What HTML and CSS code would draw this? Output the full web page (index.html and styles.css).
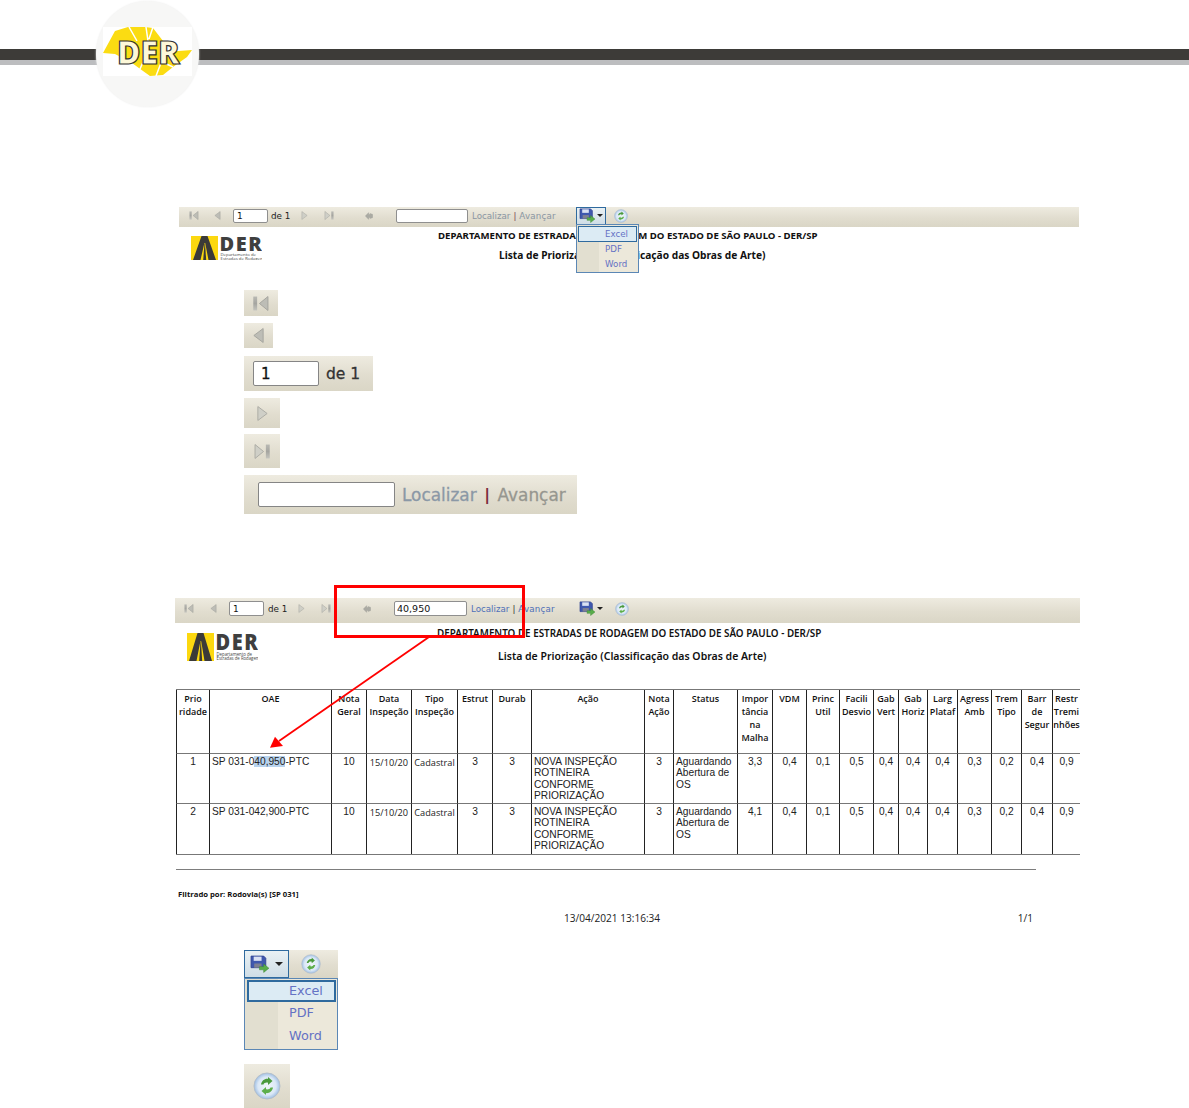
FILE: index.html
```html
<!DOCTYPE html>
<html lang="pt-BR">
<head>
<meta charset="utf-8">
<title>Lista de Priorização</title>
<link rel="stylesheet" href="styles.css">
</head>
<body>
<svg class="defs" width="0" height="0" aria-hidden="true">
  <defs>
    <linearGradient id="gbar" x1="0" x2="0" y1="0" y2="1"><stop offset="0" stop-color="#b9b9b4"/><stop offset=".5" stop-color="#a5a5a0"/><stop offset="1" stop-color="#c4c4be"/></linearGradient>
    <radialGradient id="gref" cx=".5" cy=".5" r=".5"><stop offset="0" stop-color="#f1f6fb"/><stop offset=".7" stop-color="#dbe8f6"/><stop offset="1" stop-color="#9fbfe4"/></radialGradient>
    <symbol id="i-first" viewBox="0 0 11 11"><rect x="0.5" y="1" width="2.500" height="9" fill="url(#gbar)"/><path d="M10 1v9L4.500 5.500z" fill="#bdbdb6" stroke="#a3a39d" stroke-width=".6"/></symbol>
    <symbol id="i-prev" viewBox="0 0 8 11"><path d="M7 1v9L1 5.500z" fill="#bdbdb6" stroke="#a3a39d" stroke-width=".6"/></symbol>
    <symbol id="i-next" viewBox="0 0 8 11"><path d="M1 1v9l6-4.500z" fill="#cfcfc7" stroke="#aaaaa3" stroke-width=".6"/></symbol>
    <symbol id="i-last" viewBox="0 0 11 11"><path d="M1 1v9l5.500-4.500z" fill="#cfcfc7" stroke="#aaaaa3" stroke-width=".6"/><rect x="8" y="1" width="2.500" height="9" fill="url(#gbar)"/></symbol>
    <symbol id="i-back" viewBox="0 0 10 10"><path d="M0.500 5L4.500 .8v2.200h2V2l3 1v4l-3 1V7h-2v2.200z" fill="#aaaaa3" stroke="#9b9b95" stroke-width=".5"/></symbol>
    <symbol id="i-save" viewBox="0 0 19 17">
      <path d="M1 1h12l2 2v9H1z" fill="#3f58ae" stroke="#2e4290" stroke-width=".8"/>
      <rect x="3.500" y="1.500" width="7.500" height="4" fill="#d9e1f3"/>
      <rect x="4" y="8" width="7" height="4" fill="#7d8092"/>
      <path d="M9 11h4V8.500l5 4-5 4V14H9z" fill="#58ad4a" stroke="#3f8a35" stroke-width=".5"/>
    </symbol>
    <symbol id="i-refresh" viewBox="0 0 28 28">
      <circle cx="14" cy="14" r="13" fill="url(#gref)" stroke="#b4bfca" stroke-width="1"/>
      <path d="M8 12.500c.6-3.500 3.500-6 7-5.600V5l4.500 4-4.500 4v-2.300c-2.500-.4-4 .4-4.500 1.800z" fill="#4a9a3c"/>
      <path d="M20 15.500c-.6 3.500-3.500 6-7 5.600V23l-4.500-4 4.500-4v2.300c2.500.4 4-.4 4.500-1.800z" fill="#5dae4a"/>
    </symbol>
    <symbol id="i-der" viewBox="0 0 71 24" preserveAspectRatio="none">
      <rect x="0" y="0" width="27" height="24" fill="#fcd80f"/>
      <path d="M2 24 10.500 0h6L25 24h-7.500L14.200 7h-.8L9.500 24z" fill="#3b3a38"/>
      <path d="M13.500 7.500 12.200 24h3l-1.200-16.500z" fill="#3b3a38"/>
      <text x="28.500" y="14.500" class="der-word">DER</text>
      <text x="29.500" y="19.500" class="der-sub">Departamento de</text>
      <text x="29.500" y="23.500" class="der-sub">Estradas de Rodagem</text>
    </symbol>
  </defs>
</svg>

<div class="page">
  <header class="top">
    <div class="bar"></div>
    <div class="seal">
      <svg class="seal-art" viewBox="0 0 89 49" width="89" height="49">
        <rect width="89" height="49" fill="#fff"/>
        <path d="M0 26 12 4 25 0 42 0 50 1 60 14 62 25 89 23 84 30 70 40 60 48 47 49 40 44 29 36 12 27z" fill="#fbdc12"/>
        <path d="M26 0 34 14M43 0 45 14M50 0 46 12M61 28 53 49M57 34 70 40M40 35 34 49" stroke="#fff" stroke-width="1.500" fill="none"/>
        <text x="14" y="37" class="seal-word">DER</text>
      </svg>
    </div>
  </header>

  <div class="toolbar toolbar-a">
    <svg class="ic w10 ml10"><use href="#i-first"/></svg>
    <svg class="ic w7 ml15"><use href="#i-prev"/></svg>
    <input class="field pg ml12" value="1" aria-label="Página">
    <span class="tb-text ml3">de 1</span>
    <svg class="ic w7 ml10"><use href="#i-next"/></svg>
    <svg class="ic w10 ml16"><use href="#i-last"/></svg>
    <svg class="ic w8 ml31"><use href="#i-back"/></svg>
    <input class="field find ml23" aria-label="Localizar">
    <span class="tb-link ml4">Localizar</span><span class="tb-sep">|</span><span class="tb-link">Avançar</span>
    <span class="savebtn active ml20"><svg class="ic-save"><use href="#i-save"/></svg><i class="caret"></i></span>
    <svg class="ic-ref ml8"><use href="#i-refresh"/></svg>
  </div>

  <div class="rep rep-a">
    <svg class="rep-logo la"><use href="#i-der"/></svg>
    <div class="rep-title">DEPARTAMENTO DE ESTRADAS DE RODAGEM DO ESTADO DE SÃO PAULO - DER/SP</div>
    <div class="rep-sub">Lista de Priorização (Classificação das Obras de Arte)</div>
    <ul class="menu menu-sm">
      <li class="on">Excel</li>
      <li>PDF</li>
      <li>Word</li>
    </ul>
  </div>

  <div class="parts">
    <div class="part p1"><svg class="big-first"><use href="#i-first"/></svg></div>
    <div class="part p2"><svg class="big-prev"><use href="#i-prev"/></svg></div>
    <div class="part p3"><input class="field big pg-big" value="1" aria-label="Página"><span class="big-text">de 1</span></div>
    <div class="part p4"><svg class="big-prev"><use href="#i-next"/></svg></div>
    <div class="part p5"><svg class="big-first"><use href="#i-last"/></svg></div>
    <div class="part p6"><input class="field big find-big" aria-label="Localizar"><span class="big-link">Localizar</span><span class="big-sep">|</span><span class="big-link">Avançar</span></div>
  </div>

  <div class="toolbar toolbar-b">
    <svg class="ic w10 ml9"><use href="#i-first"/></svg>
    <svg class="ic w7 ml16"><use href="#i-prev"/></svg>
    <input class="field pg ml12" value="1" aria-label="Página">
    <span class="tb-text ml4">de 1</span>
    <svg class="ic w7 ml10"><use href="#i-next"/></svg>
    <svg class="ic w10 ml16"><use href="#i-last"/></svg>
    <svg class="ic w8 ml32"><use href="#i-back"/></svg>
    <input class="field find ml23" value="40,950" aria-label="Localizar">
    <span class="tb-link blue ml4">Localizar</span><span class="tb-sep dark">|</span><span class="tb-link blue">Avançar</span>
    <span class="savebtn ml22"><svg class="ic-save"><use href="#i-save"/></svg><i class="caret"></i></span>
    <svg class="ic-ref ml8"><use href="#i-refresh"/></svg>
  </div>

  <div class="rep rep-b">
    <svg class="rep-logo lb"><use href="#i-der"/></svg>
    <div class="rep-title">DEPARTAMENTO DE ESTRADAS DE RODAGEM DO ESTADO DE SÃO PAULO - DER/SP</div>
    <div class="rep-sub">Lista de Priorização (Classificação das Obras de Arte)</div>
  </div>

  <div class="tablewrap">
    <table class="grid">
      <colgroup>
        <col class="c33"><col class="c122"><col class="c35"><col class="c45"><col class="c46"><col class="c35"><col class="c39"><col class="c113"><col class="c29"><col class="c64"><col class="c35"><col class="c34"><col class="c33"><col class="c34"><col class="c25"><col class="c29"><col class="c30"><col class="c34"><col class="c30"><col class="c31"><col class="c28">
      </colgroup>
      <thead>
        <tr>
          <th>Prio<br>ridade</th><th>OAE</th><th>Nota<br>Geral</th><th>Data<br>Inspeção</th><th>Tipo<br>Inspeção</th><th>Estrut</th><th>Durab</th><th>Ação</th><th>Nota<br>Ação</th><th>Status</th><th>Impor<br>tância<br>na<br>Malha</th><th>VDM</th><th>Princ<br>Util</th><th>Facili<br>Desvio</th><th>Gab<br>Vert</th><th>Gab<br>Horiz</th><th>Larg<br>Plataf</th><th>Agress<br>Amb</th><th>Trem<br>Tipo</th><th>Barr<br>de<br>Segur</th><th>Restr<br>Tremi<br>nhões</th>
        </tr>
      </thead>
      <tbody>
        <tr>
          <td>1</td><td class="left">SP 031-0<mark>40,950</mark>-PTC</td><td>10</td><td class="alt">15/10/20</td><td class="alt">Cadastral</td><td>3</td><td>3</td><td class="left">NOVA INSPEÇÃO<br>ROTINEIRA<br>CONFORME<br>PRIORIZAÇÃO</td><td>3</td><td class="left">Aguardando<br>Abertura de<br>OS</td><td>3,3</td><td>0,4</td><td>0,1</td><td>0,5</td><td>0,4</td><td>0,4</td><td>0,4</td><td>0,3</td><td>0,2</td><td>0,4</td><td>0,9</td>
        </tr>
        <tr>
          <td>2</td><td class="left">SP 031-042,900-PTC</td><td>10</td><td class="alt">15/10/20</td><td class="alt">Cadastral</td><td>3</td><td>3</td><td class="left">NOVA INSPEÇÃO<br>ROTINEIRA<br>CONFORME<br>PRIORIZAÇÃO</td><td>3</td><td class="left">Aguardando<br>Abertura de<br>OS</td><td>4,1</td><td>0,4</td><td>0,1</td><td>0,5</td><td>0,4</td><td>0,4</td><td>0,4</td><td>0,3</td><td>0,2</td><td>0,4</td><td>0,9</td>
        </tr>
      </tbody>
    </table>
  </div>

  <div class="rule"></div>
  <div class="filter">Filtrado por: Rodovia(s) [SP 031]</div>
  <div class="foot"><span class="stamp">13/04/2021 13:16:34</span><span class="pages">1/1</span></div>

  <div class="export">
    <div class="export-top">
      <span class="savebtn active big-save"><svg class="ic-save-big"><use href="#i-save"/></svg><i class="caret big-caret"></i></span>
      <svg class="ic-ref-mid"><use href="#i-refresh"/></svg>
    </div>
    <ul class="menu menu-lg">
      <li class="on">Excel</li>
      <li>PDF</li>
      <li>Word</li>
    </ul>
  </div>
  <div class="part p7"><svg class="ic-ref-big"><use href="#i-refresh"/></svg></div>

  <div class="callout"></div>
  <svg class="pointer" viewBox="0 0 170 120" width="170" height="120">
    <path d="M161 1 11 105" stroke="#f00" stroke-width="1.800" fill="none"/>
    <path d="M2 111.700 7 100.700 15 110z" fill="#f00"/>
  </svg>
</div>
</body>
</html>
```

FILE: styles.css
```css
* { box-sizing: border-box; }
html, body { margin: 0; padding: 0; background: #fff; }
body { font-family: "DejaVu Sans", sans-serif; color: #111; }
.defs { position: absolute; }
.page { position: relative; width: 1189px; height: 1108px; overflow: hidden; }

/* header */
.top { position: relative; height: 206px; }
.bar { position: absolute; top: 49px; left: 0; right: 0; height: 16px; background: #3d3b38; border-bottom: 5px solid #bcbdbf; }
.seal { position: absolute; left: 96px; top: 1px; width: 103px; height: 106px; border-radius: 50%; background: #f7f7f6; display: flex; align-items: center; justify-content: center; padding: 0 0 4px 0; box-shadow: 0 0 2px #eee; }
.seal-art { display: block; margin-top: -1px; }
.seal-word { font: 800 32px "Open Sans", sans-serif; fill: #fdf8d8; stroke: #333; stroke-width: 1.200px; }

/* toolbars */
.toolbar { display: flex; align-items: center; background: linear-gradient(#eeebe0, #e1ddcf 55%, #dad6c6); }
.toolbar-a { margin: 1px 0 0 179px; width: 900px; height: 20px; padding-bottom: 3px; }
.toolbar-b { margin: 84px 0 0 175px; width: 905px; height: 25px; padding-bottom: 4px; }
.ic { height: 11px; flex: none; }
.w10 { width: 10px; }
.w7 { width: 7px; }
.w8 { width: 8px; height: 10px; }
.ml3 { margin-left: 3px; }
.ml4 { margin-left: 4px; }
.ml8 { margin-left: 8px; }
.ml9 { margin-left: 9px; }
.ml10 { margin-left: 10px; }
.ml12 { margin-left: 12px; }
.ml15 { margin-left: 15px; }
.ml16 { margin-left: 16px; }
.ml20 { margin-left: 20px; }
.ml22 { margin-left: 22px; }
.ml23 { margin-left: 23px; }
.ml31 { margin-left: 31px; }
.ml32 { margin-left: 32px; }
.field { display: block; border: 1px solid #8f8f8f; border-radius: 2px; background: #fff; padding: 0 3px; outline: 0; color: #111; font: 9px "DejaVu Sans", sans-serif; }
.pg { width: 35px; height: 14px; }
.find { width: 72px; height: 14px; }
.toolbar-b .pg { height: 15px; }
.toolbar-b .find { height: 15px; width: 73px; padding-left: 2px; font-size: 9.500px; }
.tb-text { font-size: 8.800px; color: #222; width: 20px; white-space: nowrap; }
.tb-link { font-size: 8.700px; color: #8a96a3; white-space: nowrap; }
.tb-sep + .tb-link { letter-spacing: .2px; }
.tb-link.blue { color: #4e70b8; }
.tb-sep { font-size: 8.700px; color: #7a4450; margin: 0 3px; }
.tb-sep.dark { color: #333; }
.savebtn { display: flex; align-items: center; gap: 1px; width: 30px; height: 19px; padding-left: 2px; flex: none; }
.savebtn.active { border: 1px solid #2f6a9e; background: linear-gradient(#e9f1f4, #cfdde6); height: 18px; }
.ic-save { width: 17px; height: 15px; flex: none; }
.caret { width: 0; height: 0; border: 3px solid transparent; border-top: 3px solid #222; border-bottom: 0; flex: none; }
.ic-ref { width: 14px; height: 14px; flex: none; }

/* report heading */
.rep { position: relative; text-align: center; }
.rep-a { height: 48px; width: 900px; margin-left: 179px; }
.rep-b { height: 66px; width: 905px; margin-left: 175px; }
.rep-logo { position: absolute; display: block; width: 71px; }
.la { left: 12px; top: 9px; height: 24px; }
.lb { left: 12px; top: 10px; height: 28px; }
.der-word { font: 800 20px "Open Sans", sans-serif; fill: #3f3f3f; letter-spacing: 1.500px; }
.der-sub { font: 4.300px "Open Sans", sans-serif; fill: #444; }
.rep-title, .rep-sub { font-family: "Noto Sans", sans-serif; font-weight: 600; color: #111; white-space: nowrap; }
.rep-a .rep-title { position: absolute; left: 259px; top: 3px; font-size: 9.650px; line-height: 12px; font-weight: 700; }
.rep-a .rep-sub { position: absolute; left: 320px; top: 21px; font-size: 10.200px; line-height: 14px; font-weight: 700; }
.rep-b .rep-title { position: absolute; left: 262px; top: 4px; font-size: 9.850px; line-height: 12px; }
.rep-b .rep-sub { position: absolute; left: 323px; top: 26px; font-size: 10.500px; line-height: 14px; }

/* dropdown menu */
.menu { list-style: none; margin: 0; padding: 0; border: 1px solid #5b87b5; position: absolute; color: #6472c4; text-align: left; }
.menu-sm { left: 397px; top: -3px; width: 63px; height: 49px; padding: 1px; font-size: 8.700px; background: linear-gradient(90deg, #e2dfd0 22px, #ece8da 22px); }
.menu-sm li { height: 15px; line-height: 15px; padding-left: 27px; }
.menu-sm li.on { height: 16px; padding-left: 26px; border: 1px solid #2f6a9e; background: #dcebf4; }
.menu-lg { position: static; width: 94px; height: 72px; padding: 1px 1px 1px 2px; font-size: 12.800px; background: linear-gradient(90deg, #e2dfd0 33px, #ece8da 33px); }
.menu-lg li { height: 22.500px; line-height: 22.500px; padding-left: 42px; }
.menu-lg li.on { height: 22px; line-height: 18px; border: 2px solid #2f6a9e; background: #dcebf4; padding-left: 40px; }

/* cut-out parts */
.parts { display: flex; flex-direction: column; align-items: flex-start; margin: 15px 0 0 244px; }
.part { display: flex; align-items: center; flex: none; background: linear-gradient(#eeebe0, #e1ddcf 55%, #dad6c6); }
.p1 { width: 34px; height: 26px; justify-content: center; }
.p2 { width: 29px; height: 25px; margin-top: 7px; justify-content: center; }
.p3 { width: 129px; height: 35px; margin-top: 8px; padding-left: 9px; }
.p4 { width: 36px; height: 30px; margin-top: 7px; justify-content: center; }
.p5 { width: 36px; height: 34px; margin-top: 6px; justify-content: center; }
.p6 { width: 333px; height: 39px; margin-top: 7px; padding-left: 14px; }
.p7 { width: 46px; height: 44px; margin: 14px 0 0 244px; justify-content: center; }
.big-first { width: 20px; height: 17px; }
.big-prev { width: 13px; height: 17px; }
.field.big { height: 25px; font-size: 15px; padding: 0 7px; border-color: #858585; -webkit-text-stroke: .3px #111; }
.pg-big { width: 66px; }
.find-big { width: 137px; }
.big-text { margin-left: 7px; font-size: 15.500px; color: #333; -webkit-text-stroke: .3px #333; }
.big-link { font-size: 16.900px; color: #8b98a6; white-space: nowrap; -webkit-text-stroke: .3px #8b98a6; }
.big-link:last-child { color: #96968f; -webkit-text-stroke-color: #96968f; }
.big-sep { font-size: 16px; font-weight: 700; color: #7a2a3a; margin: 0 7.500px; }
.p6 .big-link:first-of-type { margin-left: 7px; }

/* data table */
.tablewrap { margin-left: 176px; width: 904px; height: 166px; overflow: hidden; }
.grid { table-layout: fixed; border-collapse: separate; border-spacing: 0; width: 904px; border-top: 1px solid #777; border-bottom: 1px solid #777; }
.c25 { width: 25px; } .c28 { width: 28px; } .c29 { width: 29px; } .c30 { width: 30px; } .c31 { width: 31px; } .c33 { width: 33px; } .c34 { width: 34px; } .c35 { width: 35px; } .c39 { width: 39px; } .c45 { width: 45px; } .c46 { width: 46px; } .c64 { width: 64px; } .c113 { width: 113px; } .c122 { width: 122px; }
.grid th, .grid td { border-left: 1px solid #222; padding: 0; overflow: hidden; text-align: center; vertical-align: top; white-space: nowrap; }
.grid th { height: 64px; padding-top: 2px; font: 600 9px/13px "Open Sans", sans-serif; color: #111; border-bottom: 1px solid #777; }
.grid td { height: 50px; padding-top: 2px; font: 10.200px/11.300px "Liberation Sans", sans-serif; color: #222; border-bottom: 1px solid #777; }
.grid tr:last-child td { border-bottom: 0; height: 50px; }
.grid td.left { text-align: left; padding-left: 2px; }
.grid td.alt { font: 9.200px/13px "Open Sans", sans-serif; }
mark { background: #b8d3ee; color: inherit; }

/* footer */
.rule { margin: 14px 0 0 176px; width: 860px; height: 1px; background: #7d7d7d; }
.filter { margin: 19px 0 0 178px; font: 700 7.700px/11px "Open Sans", sans-serif; color: #111; }
.foot { position: relative; margin: 12px 0 0 564px; width: 469px; height: 13px; display: flex; justify-content: space-between; font: 10.100px/13px "Open Sans", sans-serif; color: #222; }

/* export samples */
.export { margin: 25px 0 0 244px; width: 94px; }
.export-top { display: flex; align-items: center; height: 28px; width: 94px; background: linear-gradient(#eeebe0, #e1ddcf 55%, #dad6c6); }
.savebtn.big-save { width: 45px; height: 28px; margin: 0; padding-left: 5px; border-width: 1px; gap: 5px; }
.ic-save-big { width: 20px; height: 18px; flex: none; }
.big-caret { border-width: 4px; border-bottom: 0; }
.ic-ref-mid { width: 20px; height: 20px; margin-left: 12px; }
.ic-ref-big { width: 28px; height: 28px; }

/* annotation drawn over the document */
.callout { position: absolute; left: 334px; top: 585px; width: 191px; height: 53px; border: 3px solid #f00; }
.pointer { position: absolute; left: 268px; top: 636px; }
```
